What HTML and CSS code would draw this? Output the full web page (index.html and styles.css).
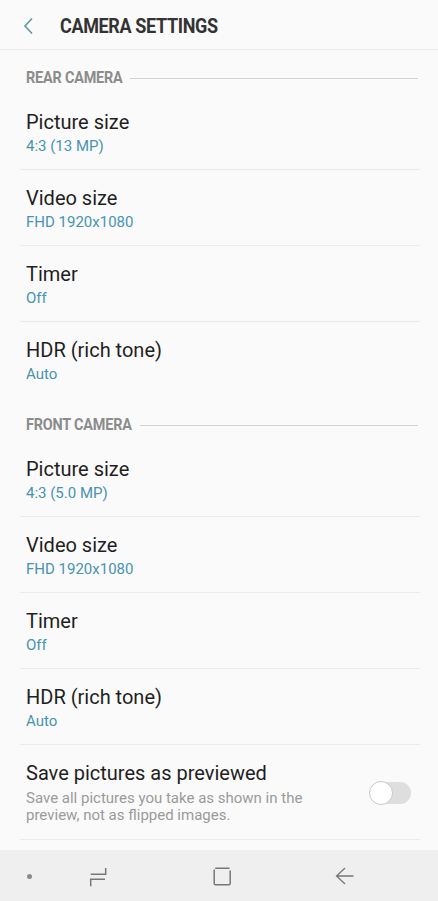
FILE: index.html
```html
<!DOCTYPE html>
<html lang="en">

<head>
    <meta charset="UTF-8">
    <meta name="viewport" content="width=device-width, initial-scale=1.0">
    <title>Camera Settings</title>
    <link rel="stylesheet" href="styles.css">
</head>

<body>
    <div class="screen">

        <header class="app-bar">
            <svg class="back" width="12" height="18" viewBox="0 0 12 18">
                <path d="M9 1.5 L2 9 L9 16.5" fill="none" stroke="#5b97a8" stroke-width="1.6" />
            </svg>
            <h1>CAMERA SETTINGS</h1>
        </header>

        <main class="list">
            <div class="group-title">
                <span>REAR CAMERA</span>
            </div>

            <div class="item">
                <div class="item-title">Picture size</div>
                <div class="item-value">4:3 (13 MP)</div>
            </div>
            <div class="item">
                <div class="item-title">Video size</div>
                <div class="item-value">FHD 1920x1080</div>
            </div>
            <div class="item">
                <div class="item-title">Timer</div>
                <div class="item-value">Off</div>
            </div>
            <div class="item last">
                <div class="item-title">HDR (rich tone)</div>
                <div class="item-value">Auto</div>
            </div>

            <div class="group-title">
                <span>FRONT CAMERA</span>
            </div>

            <div class="item">
                <div class="item-title">Picture size</div>
                <div class="item-value">4:3 (5.0 MP)</div>
            </div>
            <div class="item">
                <div class="item-title">Video size</div>
                <div class="item-value">FHD 1920x1080</div>
            </div>
            <div class="item">
                <div class="item-title">Timer</div>
                <div class="item-value">Off</div>
            </div>
            <div class="item">
                <div class="item-title">HDR (rich tone)</div>
                <div class="item-value">Auto</div>
            </div>
            <div class="item switch-item">
                <div class="item-text">
                    <div class="item-title">Save pictures as previewed</div>
                    <div class="item-desc">Save all pictures you take as shown in the preview, not as flipped images.</div>
                </div>
                <div class="toggle"><span class="knob"></span></div>
            </div>
        </main>

        <nav class="nav-bar">
            <span class="dot"></span>
            <svg width="20" height="22" viewBox="0 0 20 22">
                <path d="M16.7 3 V9.3 H1.7 M1.7 21.3 V14.3 H16" fill="none" stroke="#777" stroke-width="1.5" />
            </svg>
            <svg width="22" height="22" viewBox="0 0 22 22">
                <path d="M3.2 4.5 V18.5 Q3.2 19.8 4.5 19.8 H17.8 Q19.2 19.8 19.2 18.5 V5.5 M4.2 3.2 H18.5" fill="none" stroke="#777" stroke-width="1.5" />
            </svg>
            <svg width="20" height="20" viewBox="0 0 20 20">
                <path d="M18.5 10 H1.5 M10 2 L1.5 10 L10 18" fill="none" stroke="#777" stroke-width="1.3" />
            </svg>
        </nav>

    </div>
</body>

</html>
```

FILE: styles.css
```css
body {
    margin: 0;
    padding: 0;
    font-family: 'Roboto', 'Liberation Sans', sans-serif;
    background-color: #fafafa;
    color: #222;
}

.screen {
    width: 438px;
    height: 901px;
    display: flex;
    flex-direction: column;
    overflow: hidden;
}

/* top bar */
.app-bar {
    height: 50px;
    display: flex;
    align-items: center;
    border-bottom: 1px solid #ececec;
    box-sizing: border-box;
    padding-top: 3px;
}

.back {
    margin-left: 23px;
    margin-top: -1px;
}

.app-bar h1 {
    margin: 0 0 0 25px;
    font-size: 20px;
    font-weight: 700;
    color: #333;
    letter-spacing: -0.4px;
    transform: scaleX(0.9);
    transform-origin: left center;
}

/* list */
.list {
    flex: 1;
}

.group-title {
    display: flex;
    align-items: center;
    gap: 8px;
    margin: 0 20px 0 26px;
    padding: 19px 0 7px;
    line-height: 18px;
}

.group-title span {
    font-size: 16px;
    font-weight: 700;
    color: #8c8c8c;
    letter-spacing: -0.2px;
    transform: scaleX(0.9);
    transform-origin: left center;
    margin-right: -11px;
}

.group-title::after {
    content: "";
    flex: 1;
    height: 1px;
    background-color: #d2d2d2;
}

.item {
    margin: 0 18px 0 20px;
    padding: 15px 0 13px 6px;
    border-bottom: 1px solid #ebebeb;
}

.item.last {
    border-bottom: none;
    padding-bottom: 13px;
}

.item-title {
    font-size: 20px;
    line-height: 27px;
    color: #1f1f1f;
}

.item-value {
    font-size: 15px;
    line-height: 20px;
    color: #4893b0;
}

.switch-item {
    display: flex;
    align-items: center;
    padding-bottom: 15px;
}

.item-text {
    flex: 1;
}

.item-desc {
    margin-top: 3px;
    font-size: 15px;
    line-height: 17px;
    color: #9a9a9a;
    padding-right: 40px;
}

.toggle {
    width: 41px;
    height: 22px;
    margin-right: 9px;
    margin-top: 2px;
    border-radius: 11px;
    background-color: #dedede;
    position: relative;
}

.toggle .knob {
    position: absolute;
    left: -1px;
    top: -1px;
    width: 22px;
    height: 22px;
    border-radius: 50%;
    background-color: #fff;
    border: 1px solid #c8c8c8;
}

/* system navigation */
.nav-bar {
    height: 51px;
    background-color: #efefef;
    display: flex;
    align-items: center;
}

.nav-bar .dot {
    width: 5px;
    height: 5px;
    border-radius: 50%;
    background-color: #8a8a8a;
    margin-left: 27px;
    margin-top: 2px;
}

.nav-bar svg:nth-of-type(1) {
    margin-left: 57px;
}

.nav-bar svg:nth-of-type(2) {
    margin-left: 102px;
}

.nav-bar svg:nth-of-type(3) {
    margin-left: 102px;
}
```
